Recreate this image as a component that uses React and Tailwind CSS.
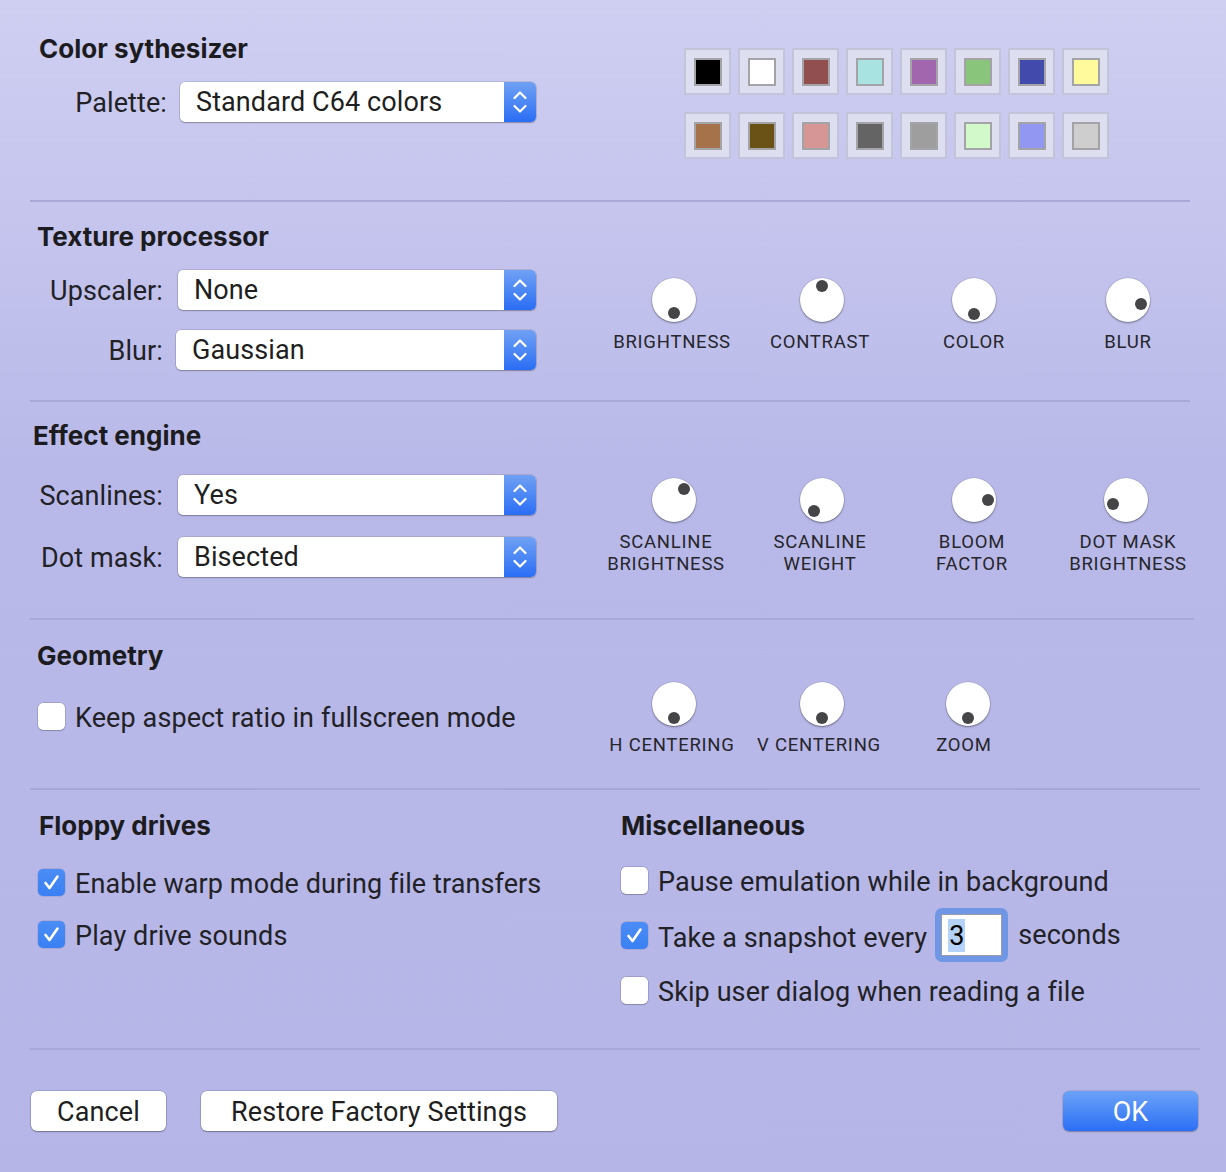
import React from "react";

const SWATCHES = [
  "#000000", "#ffffff", "#924f4f", "#a9e3e1", "#a166ad", "#89c57a", "#424bab", "#fffb9c",
  "#a5724a", "#6a5216", "#d69696", "#646464", "#9e9e9e", "#d1f9c9", "#9297f2", "#cecece",
];

function Chevrons() {
  return (
    <svg width="14" height="24" viewBox="0 0 14 24" fill="none" stroke="white" strokeWidth="2.2" strokeLinecap="round" strokeLinejoin="round">
      <path d="M1.5 8 L7 2.5 L12.5 8" />
      <path d="M1.5 16 L7 21.5 L12.5 16" />
    </svg>
  );
}

function Popup({ value, widthClass }) {
  return (
    <div className={`flex h-[40px] ${widthClass} rounded-[5px] bg-white shadow-[0_0_0_0.5px_rgba(0,0,0,0.2),0_1px_1.5px_rgba(0,0,0,0.25)]`}>
      <div className="flex flex-1 items-center pt-[1px] pl-[16px] text-[27px] leading-none tracking-[0.1px] text-[#1f1f22]">{value}</div>
      <div className="flex w-[32px] items-center justify-center rounded-r-[5px] bg-linear-to-b from-[#6fa0f3] to-[#2a6df5]">
        <Chevrons />
      </div>
    </div>
  );
}

function PopupRow({ label, value, labelClass, gapClass, widthClass, rowClass }) {
  return (
    <div className={`flex items-center ${rowClass}`}>
      <div className={`${labelClass} pt-[1px] text-right text-[27px] leading-[32px] tracking-[0.1px]`}>{label}</div>
      <div className={gapClass}>
        <Popup value={value} widthClass={widthClass} />
      </div>
    </div>
  );
}

function Title({ children, className }) {
  return (
    <div className={`font-[family-name:Inter,sans-serif] text-[26px] font-bold leading-[28px] text-[#1c1c20] ${className}`}>
      {children}
    </div>
  );
}

function Knob({ dx, dy, lines, colClass, labelClass }) {
  return (
    <div className={`flex flex-col items-center ${colClass}`}>
      <div className="relative h-[44px] w-[44px] rounded-full bg-white shadow-[0_0_0_0.5px_rgba(0,0,0,0.12),0_1px_2px_rgba(0,0,0,0.4)]">
        <div
          className="absolute h-[12px] w-[12px] rounded-full bg-[#454548]"
          style={{ left: 16 + dx, top: 16 + dy }}
        />
      </div>
      <div className={`text-center text-[18.5px] leading-[22px] tracking-[0.75px] text-[#26262b] ${labelClass}`}>
        {lines.map((l) => (
          <div key={l}>{l}</div>
        ))}
      </div>
    </div>
  );
}

function Checkbox({ checked }) {
  if (checked) {
    return (
      <div className="flex h-[27px] w-[27px] shrink-0 items-center justify-center rounded-[5px] bg-linear-to-b from-[#4b8df6] to-[#3a80f4] shadow-[0_0_0_0.5px_rgba(0,0,0,0.15)]">
        <svg width="27" height="27" viewBox="0 0 27 27" fill="none">
          <path d="M7.5 14 L11.5 19 L19.5 7.5" stroke="white" strokeWidth="2.6" strokeLinecap="round" strokeLinejoin="round" />
        </svg>
      </div>
    );
  }
  return <div className="h-[27px] w-[27px] shrink-0 rounded-[5px] bg-white shadow-[0_0_0_0.5px_rgba(0,0,0,0.25),0_1px_1px_rgba(0,0,0,0.15)]" />;
}

function CheckRow({ checked, label, rowClass }) {
  return (
    <div className={`flex h-[32px] items-center ${rowClass}`}>
      <Checkbox checked={checked} />
      <div className="ml-[10px] pt-[4px] text-[27px] leading-[32px] tracking-[0.1px] whitespace-nowrap">{label}</div>
    </div>
  );
}

function Divider({ className }) {
  return <div className={`h-[2px] bg-[#a8a9d8] ${className}`} />;
}

function Button({ children, className, primary }) {
  return (
    <div
      className={`flex h-[40px] items-center justify-center rounded-[6px] pt-[3px] text-[27px] leading-none tracking-[0.1px] ${
        primary
          ? "bg-linear-to-b from-[#6ba2f7] to-[#2b6ef5] text-white shadow-[0_0_0_0.5px_rgba(0,0,0,0.15),0_1px_1.5px_rgba(0,0,0,0.25)]"
          : "bg-white text-[#1f1f22] shadow-[0_0_0_0.5px_rgba(0,0,0,0.22),0_1px_1.5px_rgba(0,0,0,0.3)]"
      } ${className}`}
    >
      {children}
    </div>
  );
}

export default function App() {
  return (
    <div className="h-[1172px] w-[1226px] overflow-hidden bg-linear-to-b from-[#cfcff2] via-[#b9b9e9] via-40% to-[#b5b5e7] font-[family-name:Roboto,sans-serif] text-[#222226]">
      {/* Color synthesizer */}
      <div className="flex h-[200px]">
        <div className="w-[598px] pt-[35px]">
          <Title className="ml-[39px]">Color sythesizer</Title>
          <PopupRow
            label="Palette:"
            value="Standard C64 colors"
            labelClass="w-[167px]"
            gapClass="ml-[13px]"
            widthClass="w-[356px]"
            rowClass="mt-[19px]"
          />
        </div>
        <div className="ml-[86px] pt-[48px]">
          <div className="grid grid-cols-[repeat(8,47px)] gap-x-[7px] gap-y-[17px]">
            {SWATCHES.map((c, i) => (
              <div key={i} className="flex h-[47px] w-[47px] items-center justify-center border-2 border-[#c3c3da] bg-[#dedef1]">
                <div className="h-[28px] w-[28px] border-2 border-[#a4a4a6]" style={{ backgroundColor: c }} />
              </div>
            ))}
          </div>
        </div>
      </div>
      <Divider className="ml-[30px] w-[1160px]" />

      {/* Texture processor */}
      <div className="flex h-[198px]">
        <div className="w-[598px] pt-[21px]">
          <Title className="ml-[37px]">Texture processor</Title>
          <PopupRow label="Upscaler:" value="None" labelClass="w-[163px]" gapClass="ml-[15px]" widthClass="w-[358px]" rowClass="mt-[19px]" />
          <PopupRow label="Blur:" value="Gaussian" labelClass="w-[163px]" gapClass="ml-[13px]" widthClass="w-[360px]" rowClass="mt-[20px]" />
        </div>
        <div className="flex pt-[76px]">
          <Knob dx={0} dy={13} lines={["BRIGHTNESS"]} colClass="w-[152px]" labelClass="mt-[9px] -translate-x-[2px]" />
          <Knob dx={0} dy={-14} lines={["CONTRAST"]} colClass="w-[144px]" labelClass="mt-[9px] -translate-x-[2px]" />
          <Knob dx={0} dy={14} lines={["COLOR"]} colClass="w-[160px]" labelClass="mt-[9px]" />
          <Knob dx={13} dy={4} lines={["BLUR"]} colClass="w-[148px]" labelClass="mt-[9px]" />
        </div>
      </div>
      <Divider className="ml-[30px] w-[1160px]" />

      {/* Effect engine */}
      <div className="flex h-[216px]">
        <div className="w-[598px] pt-[20px]">
          <Title className="ml-[33px]">Effect engine</Title>
          <PopupRow label="Scanlines:" value="Yes" labelClass="w-[163px]" gapClass="ml-[15px]" widthClass="w-[358px]" rowClass="mt-[25px]" />
          <PopupRow label="Dot mask:" value="Bisected" labelClass="w-[163px]" gapClass="ml-[15px]" widthClass="w-[358px]" rowClass="mt-[22px]" />
        </div>
        <div className="flex pt-[76px]">
          <Knob dx={10} dy={-11} lines={["SCANLINE", "BRIGHTNESS"]} colClass="w-[152px]" labelClass="mt-[9px] -translate-x-[8px]" />
          <Knob dx={-8} dy={11} lines={["SCANLINE", "WEIGHT"]} colClass="w-[144px]" labelClass="mt-[9px] -translate-x-[2px]" />
          <Knob dx={14} dy={0} lines={["BLOOM", "FACTOR"]} colClass="w-[160px]" labelClass="mt-[9px] -translate-x-[2px]" />
          <Knob dx={-13} dy={4} lines={["DOT MASK", "BRIGHTNESS"]} colClass="w-[148px] -translate-x-[2px]" labelClass="mt-[9px] translate-x-[2px]" />
        </div>
      </div>
      <Divider className="ml-[30px] w-[1164px]" />

      {/* Geometry */}
      <div className="flex h-[168px]">
        <div className="w-[598px] pt-[22px]">
          <Title className="ml-[37px]">Geometry</Title>
          <CheckRow checked={false} label="Keep aspect ratio in fullscreen mode" rowClass="ml-[38px] mt-[30px]" />
        </div>
        <div className="flex pt-[62px]">
          <Knob dx={0} dy={14} lines={["H CENTERING"]} colClass="w-[152px]" labelClass="mt-[8px] -translate-x-[2px]" />
          <Knob dx={0} dy={14} lines={["V CENTERING"]} colClass="w-[144px]" labelClass="mt-[8px] -translate-x-[3px]" />
          <Knob dx={0} dy={14} lines={["ZOOM"]} colClass="w-[148px]" labelClass="mt-[8px] -translate-x-[4px]" />
        </div>
      </div>
      <Divider className="ml-[30px] w-[1170px]" />

      {/* Floppy + Misc */}
      <div className="flex h-[258px] pt-[22px]">
        <div className="w-[621px] pl-[38px]">
          <Title className="ml-[1px]">Floppy drives</Title>
          <CheckRow checked label="Enable warp mode during file transfers" rowClass="mt-[26px]" />
          <CheckRow checked label="Play drive sounds" rowClass="mt-[20px]" />
        </div>
        <div>
          <Title>Miscellaneous</Title>
          <CheckRow checked={false} label="Pause emulation while in background" rowClass="mt-[24px]" />
          <div className="mt-[12px] flex h-[54px] items-center">
            <Checkbox checked />
            <div className="ml-[10px] pt-[5px] text-[27px] leading-[32px] tracking-[0.1px] whitespace-nowrap">Take a snapshot every</div>
            <div className="ml-[8px] rounded-[7px] bg-[#6f97e6] p-[6px]">
              <div className="flex h-[42px] w-[61px] items-center border border-[#9a9aa8] bg-white pl-[6px]">
                <span className="bg-[#b5d3f8] px-[1px] pt-[2px] text-[27px] leading-[31px] text-black">3</span>
              </div>
            </div>
            <div className="ml-[10px] text-[27px] leading-[32px] tracking-[0.1px]">seconds</div>
          </div>
          <CheckRow checked={false} label="Skip user dialog when reading a file" rowClass="mt-[12px]" />
        </div>
      </div>
      <Divider className="ml-[30px] w-[1170px]" />

      {/* Footer */}
      <div className="flex h-[120px] items-start pt-[41px] pr-[28px]">
        <Button className="ml-[31px] w-[135px]">Cancel</Button>
        <Button className="ml-[35px] w-[356px]">Restore Factory Settings</Button>
        <div className="flex-1" />
        <Button primary className="w-[135px]">OK</Button>
      </div>
    </div>
  );
}
